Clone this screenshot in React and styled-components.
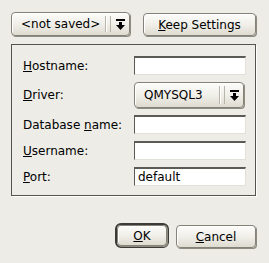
import styled, { createGlobalStyle } from "styled-components";

const Global = createGlobalStyle`
	html, body {
		margin: 0;
		padding: 0;
		background: #edece6;
	}
	body {
		font-family: "DejaVu Sans", "Liberation Sans", sans-serif;
		font-size: 12px;
		color: #000;
	}
`;

const Dialog = styled.div`
	width: 269px;
	height: 263px;
	box-sizing: border-box;
	padding: 12px 13px 0 11px;
	display: flex;
	flex-direction: column;
`;

const TopRow = styled.div`
	display: flex;
	align-items: flex-start;
	gap: 13px;
`;

const Button = styled.button`
	box-sizing: border-box;
	height: ${(p) => p.$h || 23}px;
	width: ${(p) => p.$w}px;
	margin-top: ${(p) => p.$mt || 0}px;
	border: 1px solid #858379;
	border-radius: 4px;
	background: linear-gradient(#fcfcfa, #f0efe9 50%, #dedbd0);
	box-shadow: 1px 1px 0 #8e8b80, inset 1px 1px 0 #fff;
	font: inherit;
	color: #000;
	padding: 0;
	display: flex;
	align-items: center;
	justify-content: center;
`;

const DefaultRing = styled.div`
	border: 2px solid #3c3b37;
	border-radius: 6px;
	display: flex;
`;

const Combo = styled.div`
	box-sizing: border-box;
	width: ${(p) => p.$w}px;
	height: ${(p) => p.$h}px;
	border: 1px solid #858379;
	border-radius: 4px;
	background: linear-gradient(#fcfcfa, #f0efe9 50%, #dedbd0);
	box-shadow: 1px 1px 0 #8e8b80, inset 1px 1px 0 #fff;
	display: flex;
	align-items: center;
	padding-left: 9px;
`;

const ComboText = styled.span`
	flex: 1;
	white-space: nowrap;
`;

const Groove = styled.span`
	align-self: stretch;
	margin: 3px 0;
	width: 4px;
	border-left: 1px solid #b8b5aa;
	border-right: 1px solid #b8b5aa;
	box-shadow: inset 1px 0 0 #fff;
`;

const ArrowBox = styled.span`
	width: 18px;
	display: flex;
	justify-content: center;
	align-items: center;
`;

const Frame = styled.div`
	margin-top: 8px;
	box-sizing: border-box;
	width: 245px;
	height: 152px;
	border: 1px solid #55544f;
	box-shadow: 1px 1px 0 #fff;
	padding: 11px 9px 0 11px;
	display: grid;
	grid-template-columns: 1fr 112px;
	row-gap: 7px;
	align-items: center;
	align-content: start;
`;

const Label = styled.label`
	white-space: nowrap;
`;

const Field = styled.div`
	box-sizing: border-box;
	height: 19px;
	background: #fff;
	border-top: 2px solid #5b5a55;
	border-left: 1px solid #5b5a55;
	border-right: 1px solid #e2e0d8;
	border-bottom: 1px solid #e2e0d8;
	padding-left: 3px;
	line-height: 16px;
`;

const BottomRow = styled.div`
	margin-top: 27px;
	display: flex;
	justify-content: flex-end;
	align-items: flex-start;
	gap: 7px;
`;

function Arrow() {
	return (
		<svg width="9" height="11" viewBox="0 0 9 11">
			<rect x="0" y="0" width="9" height="2" fill="#000" />
			<rect x="3" y="3" width="3" height="3" fill="#000" />
			<polygon points="0,6 9,6 4.5,11" fill="#000" />
		</svg>
	);
}

function ComboBox({ text, w, h }) {
	return (
		<Combo $w={w} $h={h}>
			<ComboText>{text}</ComboText>
			<Groove />
			<ArrowBox>
				<Arrow />
			</ArrowBox>
		</Combo>
	);
}

export default function App() {
	return (
		<Dialog>
			<Global />
			<TopRow>
				<ComboBox text="<not saved>" w={119} h={24} />
				<Button $w={113} $mt={1}>
					<span>
						<u>K</u>eep Settings
					</span>
				</Button>
			</TopRow>
			<Frame>
				<Label>
					<u>H</u>ostname:
				</Label>
				<Field />
				<Label>
					<u>D</u>river:
				</Label>
				<ComboBox text="QMYSQL3" w={110} h={26} />
				<Label>
					Database <u>n</u>ame:
				</Label>
				<Field />
				<Label>
					<u>U</u>sername:
				</Label>
				<Field />
				<Label>
					<u>P</u>ort:
				</Label>
				<Field>default</Field>
			</Frame>
			<BottomRow>
				<DefaultRing>
					<Button $w={50} $h={21}>
						<span>
							<u>O</u>K
						</span>
					</Button>
				</DefaultRing>
				<Button $w={80} $mt={2}>
					<span>
						<u>C</u>ancel
					</span>
				</Button>
			</BottomRow>
		</Dialog>
	);
}
